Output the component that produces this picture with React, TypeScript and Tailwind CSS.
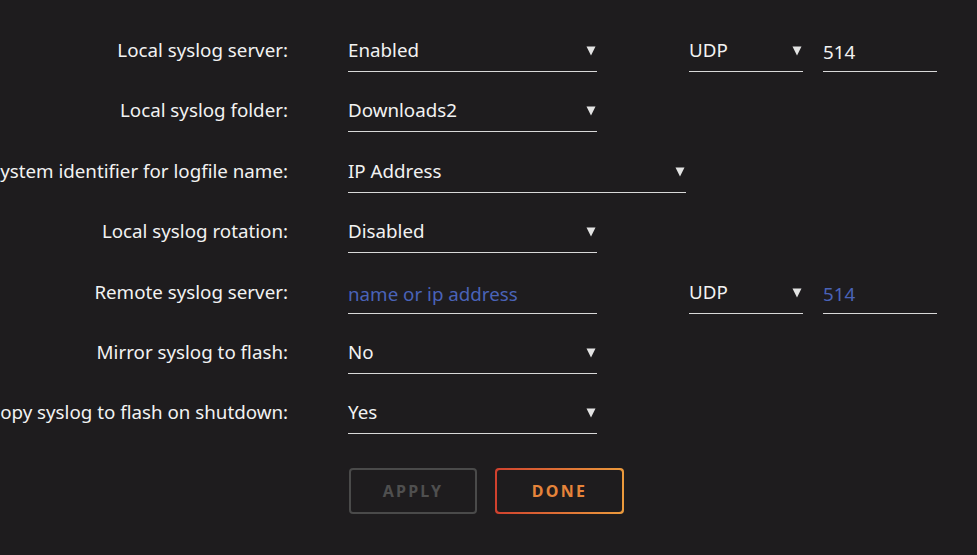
const FONT = "font-['Noto_Sans',sans-serif]";

function Arrow() {
  return (
    <svg width="10" height="10" viewBox="0 0 10 10" className="shrink-0">
      <polygon points="0.5,0.5 9.5,0.5 5,9.5" fill="#e3e3e3" />
    </svg>
  );
}

function Select({ value, width }: { value: string; width: string }) {
  return (
    <div className={`${width} h-[39px] border-b border-[#d9d9d9] pt-[5px] flex items-start justify-between pr-[1px]`}>
      <span className="leading-6 text-[#f2f2f2]">{value}</span>
      <span className="pt-[8px]">
        <Arrow />
      </span>
    </div>
  );
}

function Input({ value, placeholder, width }: { value?: string; placeholder?: string; width: string }) {
  return (
    <div className={`${width} h-[39px] border-b border-[#d9d9d9] pt-[5px]`}>
      {value ? (
        <span className="leading-6 text-[#f2f2f2]">{value}</span>
      ) : (
        <span className="leading-6 text-[#4a63b8]">{placeholder}</span>
      )}
    </div>
  );
}

function Row({ label, h, children }: { label: string; h: string; children: React.ReactNode }) {
  return (
    <div className={`flex ${h} items-start`}>
      <div className="w-[288px] shrink-0 flex justify-end pt-[5px]">
        <span className="leading-6 whitespace-nowrap text-[#f2f2f2]">{label}</span>
      </div>
      <div className="ml-[60px] flex items-start">{children}</div>
    </div>
  );
}

export default function App() {
  return (
    <div className={`${FONT} w-[977px] h-[555px] overflow-hidden bg-[#1e1c1e] text-[18.75px] pt-[33px]`}>
      <Row label="Local syslog server:" h="h-[60px]">
        <Select value="Enabled" width="w-[249px]" />
        <div className="ml-[92px]">
          <Select value="UDP" width="w-[114px]" />
        </div>
        <div className="ml-[20px]">
          <Input value="514" width="w-[114px]" />
        </div>
      </Row>
      <Row label="Local syslog folder:" h="h-[61px]">
        <Select value="Downloads2" width="w-[249px]" />
      </Row>
      <Row label="System identifier for logfile name:" h="h-[60px]">
        <Select value="IP Address" width="w-[338px]" />
      </Row>
      <Row label="Local syslog rotation:" h="h-[61px]">
        <Select value="Disabled" width="w-[249px]" />
      </Row>
      <Row label="Remote syslog server:" h="h-[60px]">
        <Input placeholder="name or ip address" width="w-[249px]" />
        <div className="ml-[92px]">
          <Select value="UDP" width="w-[114px]" />
        </div>
        <div className="ml-[20px]">
          <Input placeholder="514" width="w-[114px]" />
        </div>
      </Row>
      <Row label="Mirror syslog to flash:" h="h-[60px]">
        <Select value="No" width="w-[249px]" />
      </Row>
      <Row label="Copy syslog to flash on shutdown:" h="h-[60px]">
        <Select value="Yes" width="w-[249px]" />
      </Row>
      <div className="flex gap-[18px] ml-[349px] mt-[13px]">
        <button className="w-[128px] h-[46px] rounded-[4px] border-2 border-[#4a4a4a] text-[16px] font-bold tracking-[0.14em] text-[#4f4f4f] pb-[1px]">
          APPLY
        </button>
        <div className="w-[129px] h-[46px] rounded-[4px] p-[2px] bg-gradient-to-r from-[#d0402e] to-[#eb9a3c]">
          <button className="w-full h-full rounded-[3px] bg-[#1e1c1e] text-[16px] font-bold tracking-[0.14em] text-[#e6843a] pb-[1px]">
            DONE
          </button>
        </div>
      </div>
    </div>
  );
}
